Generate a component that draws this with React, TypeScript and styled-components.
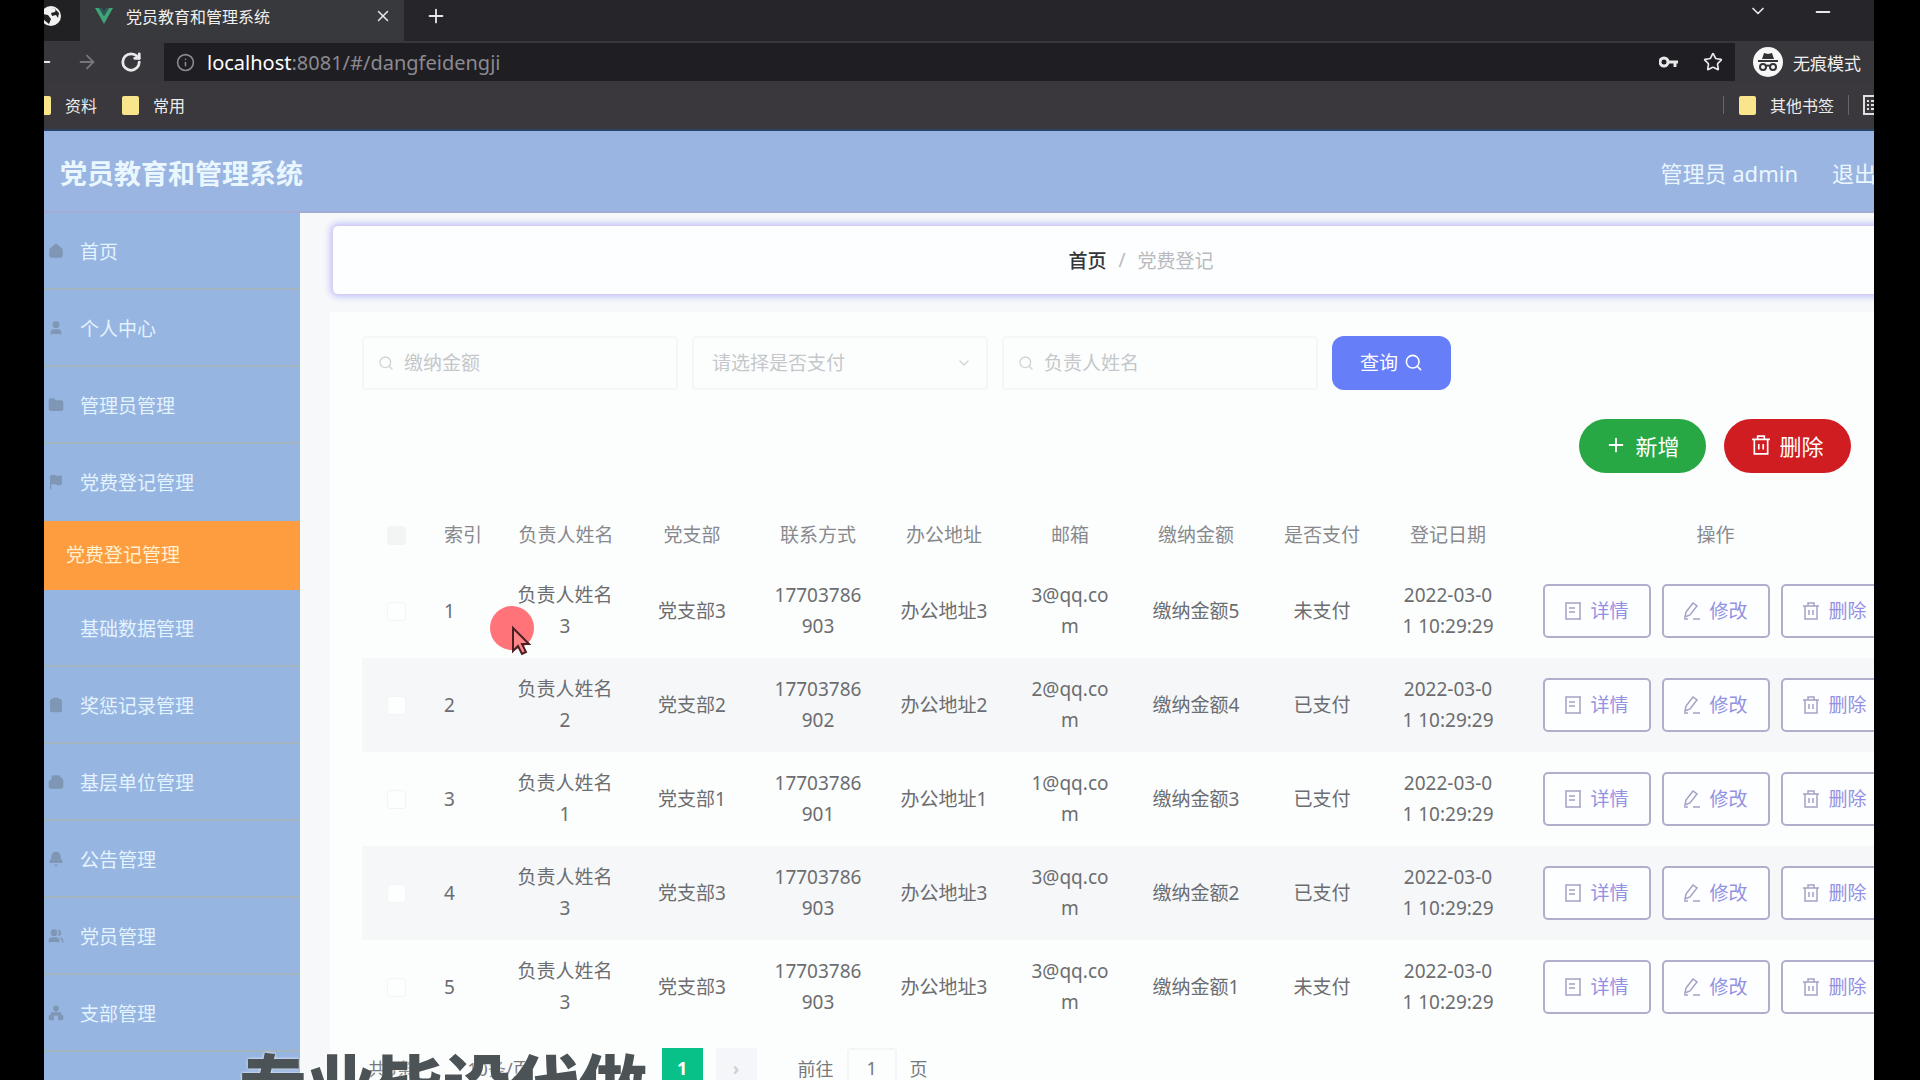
import React from "react";
import styled, { createGlobalStyle, css } from "styled-components";
import {
  ArrowLeft, ArrowRight, ChevronDown, Info, Minus, Plus, RotateCw, Search, Star, X,
  House, User, Folder, Flag, Building2, Bell, Users, Network, ClipboardList,
} from "lucide-react";

const GlobalStyle = createGlobalStyle`
  *, *::before, *::after { box-sizing: border-box; }
  body {
    margin: 0;
    background: #000;
    font-family: "Noto Sans", "Noto Sans CJK SC", sans-serif;
    overflow: hidden;
  }
  button, input, select { font: inherit; margin: 0; }
  a { color: inherit; text-decoration: none; }
`;

const Frame = styled.div`
  position: relative;
  margin: 0 46px 0 44px;
  height: 100vh;
  overflow: hidden;
  background: #fcfefe;
`;

/* ---------- browser chrome ---------- */
const IconButton = styled.button<{ $dim?: boolean }>`
  display: flex;
  flex: none;
  padding: 0;
  border: 0;
  background: none;
  color: ${(p) => (p.$dim ? "#77777b" : "#e8e8ea")};
`;

const TabStrip = styled.div`
  display: flex;
  align-items: center;
  height: 41px;
  padding: 0 40px 10px 0;
  background: #26252a;
`;

const PinnedTab = styled.div`
  display: flex;
  align-self: flex-start;
  flex: none;
  width: 36px;
  height: 41px;
  padding: 5px 0 0;
  background: #212123;
  color: #f2f2f2;
  svg { margin-left: -4px; }
`;

const ActiveTab = styled.div`
  display: flex;
  flex: none;
  align-self: flex-start;
  align-items: center;
  width: 324px;
  height: 41px;
  padding: 0 12px 10px 15px;
  background: #38393c;
  color: #f0f0f0;
  font-size: 16px;
`;

const TabTitle = styled.span`
  flex: 1;
  margin-left: 13px;
  white-space: nowrap;
`;

const WindowControls = styled.div`
  display: flex;
  gap: 44px;
  margin: -8px 0 0 auto;
`;

const NewTab = styled(IconButton)`
  margin-left: 21px;
`;

const Toolbar = styled.div`
  display: flex;
  align-items: center;
  height: 42px;
  background: #38373b;
`;

const NavButtons = styled.div`
  display: flex;
  align-items: center;
  gap: 22px;
  width: 120px;
  margin-left: -12px;
`;

const AddressBar = styled.label`
  display: flex;
  flex: 1;
  align-items: center;
  height: 38px;
  padding: 0 12px;
  margin-left: 12px;
  background: #1f1e23;
  color: #8b8a90;
  font-size: 20px;
  b { color: #fff; font-weight: 400; }
`;

const Url = styled.span`
  flex: 1;
  margin-left: 12px;
`;

const AddressActions = styled.span`
  display: flex;
  gap: 24px;
`;

const Incognito = styled.div`
  display: flex;
  align-items: center;
  gap: 10px;
  padding: 0 13px 0 18px;
  color: #f1f1f1;
  font-size: 17px;
`;

const Bookmarks = styled.nav`
  display: flex;
  align-items: center;
  height: 48px;
  padding-bottom: 2px;
  background: #3a383d;
  border-bottom: 2px solid #2a4368;
  color: #ececec;
  font-size: 16px;
`;

const Bookmark = styled.a`
  display: flex;
  align-items: center;
  gap: 14px;
  margin-right: 25px;
`;

const FirstBookmark = styled(Bookmark)`
  margin-left: -10px;
`;

const FolderMark = styled.i`
  width: 17px;
  height: 19px;
  border-radius: 2px;
  background: #f9e68c;
`;

const OtherBookmarks = styled.div`
  display: flex;
  align-items: center;
  gap: 14px;
  height: 18px;
  margin-left: auto;
  padding-left: 15px;
  border-left: 1px solid #66656a;
`;

const ReadingList = styled.span`
  display: flex;
  width: 26px;
  overflow: hidden;
  padding-left: 13px;
  border-left: 1px solid #66656a;
  svg { flex: none; }
`;

/* ---------- application shell ---------- */
const Page = styled.div`
  width: calc(100% + 106px);
`;

const Header = styled.header`
  display: flex;
  align-items: center;
  height: 82px;
  padding: 2px 104px 0 16px;
  background: #9ab5e1;
  border-bottom: 2px solid #a3add4;
  color: #eaf7ff;
  font-size: 22px;
`;

const AppTitle = styled.h1`
  flex: 1;
  margin: 0;
  font-size: 27px;
  font-weight: 700;
`;

const Account = styled.span`
  margin-right: 34px;
`;

const Body = styled.div`
  display: flex;
  min-height: calc(100vh - 213px);
`;

const Sidebar = styled.nav`
  flex: none;
  width: 256px;
  background: #97b5e1;
  color: #e3f3ff;
  font-size: 19px;
`;

const MenuItem = styled.a<{ $active?: boolean; $plain?: boolean }>`
  display: flex;
  align-items: center;
  gap: 16px;
  height: 77px;
  padding-left: 4px;
  border-bottom: 2px solid #a3b6c0;
  svg { color: #7f97b5; }
  ${(p) => p.$plain && css`border-bottom-color: transparent;`}
  ${(p) => p.$active && css`
    height: 69px;
    padding: 0 0 4px 22px;
    border-bottom: 0;
    background: #fd9d3f;
    color: #fff0cf;
  `}
`;

const IconSlot = styled.span`
  display: flex;
  width: 16px;
`;

const Content = styled.main`
  flex: 1;
  min-width: 0;
  padding: 12px 28px 0 30px;
  background: #f6f8f9;
`;

const Crumbs = styled.nav`
  display: flex;
  align-items: center;
  justify-content: center;
  gap: 12px;
  height: 70px;
  margin: 0 2px 17px;
  border: 1px solid #d3cff0;
  border-radius: 6px;
  background: #fdfeff;
  box-shadow: 0 0 6px 2px #c5c5fb;
  color: #b9babd;
  font-size: 19px;
  b { color: #333538; font-weight: 500; }
`;

const Card = styled.section`
  min-height: 780px;
  padding: 24px 32px 0;
  background: #fcfefe;
`;

/* ---------- search form ---------- */
const SearchForm = styled.form`
  display: flex;
  gap: 14px;
`;

const Field = styled.label<{ $width: number }>`
  display: flex;
  align-items: center;
  gap: 10px;
  width: ${(p) => p.$width}px;
  height: 54px;
  padding: 0 14px;
  border: 2px solid #f4f6f7;
  border-radius: 4px;
  color: #d0d2d4;
  font-size: 19px;
  svg { flex: none; }
  input, select {
    flex: 1;
    min-width: 0;
    padding: 0;
    border: 0;
    outline: 0;
    background: none;
    color: #c5c7ca;
    appearance: none;
  }
  input::placeholder { color: #c5c7ca; opacity: 1; }
  select { padding-left: 4px; }
`;

const Action = styled.button<{ $tone: string; $round?: boolean }>`
  display: flex;
  align-items: center;
  justify-content: center;
  gap: ${(p) => (p.$round ? 8 : 6)}px;
  width: ${(p) => (p.$round ? 127 : 119)}px;
  height: 54px;
  padding: 0 0 2px;
  border: 0;
  border-radius: ${(p) => (p.$round ? 27 : 12)}px;
  background: ${(p) => p.$tone};
  color: #fff;
  font-size: ${(p) => (p.$round ? 22 : 19)}px;
  white-space: nowrap;
`;

const ActionBar = styled.div`
  display: flex;
  justify-content: flex-end;
  gap: 18px;
  margin: 29px 0 34px;
  padding-right: 69px;
`;

/* ---------- table ---------- */
const Table = styled.table`
  width: 100%;
  table-layout: fixed;
  border-collapse: collapse;
  color: #6c6d70;
  font-size: 19px;
  line-height: 31px;
  text-align: center;
  th { height: 57px; padding: 0; color: #88898d; font-weight: 400; }
  td { height: 94px; padding: 0 15px; word-break: break-all; }
  td:nth-child(3) { padding: 0 15px 0 13px; }
  td:nth-child(7) { padding: 0 18px; }
  tbody tr:nth-child(even) { background: #f5f7f9; }
  th:nth-child(2), td:nth-child(2) { padding: 0 0 0 14px; text-align: left; }
  th:first-child, td:first-child, td:last-child { padding: 0; }
`;

const Col = styled.col<{ $width?: number }>`
  width: ${(p) => (p.$width ? `${p.$width}px` : "auto")};
`;

const Tick = styled.input`
  display: block;
  width: 19px;
  height: 19px;
  margin: 0 auto;
  border: 1px solid #f2f4f5;
  border-radius: 3px;
  background: #fdfefe;
  appearance: none;
  th & { background: #f3f5f5; }
`;

const RowActions = styled.div`
  display: flex;
  justify-content: center;
  gap: 11px;
`;

const RowButton = styled.button`
  display: flex;
  flex: none;
  align-items: center;
  justify-content: center;
  gap: 8px;
  width: 108px;
  height: 54px;
  padding: 0;
  border: 2px solid #b0aecd;
  border-radius: 5px;
  background: #fdfeff;
  color: #9391e2;
  font-size: 19px;
  svg { color: #a3a2c6; }
`;

/* ---------- pagination ---------- */
const Pagination = styled.nav`
  display: flex;
  align-items: center;
  gap: 13px;
  margin-top: 14px;
  color: #77787b;
  font-size: 18px;
`;

const Total = styled.span`
  margin-right: 40px;
  padding-left: 6px;
`;

const PageSize = styled.span`
  margin-right: 118px;
`;

const PageButton = styled.button<{ $current?: boolean }>`
  width: 41px;
  height: 40px;
  padding: 0;
  border: 0;
  background: ${(p) => (p.$current ? "#08c189" : "#f5f6fa")};
  color: ${(p) => (p.$current ? "#fff" : "#cfd0d4")};
  font-size: 18px;
  font-weight: 700;
`;

const Jump = styled.label`
  display: flex;
  align-items: center;
  gap: 13px;
  margin-left: 28px;
  input {
    width: 50px;
    height: 40px;
    padding: 0;
    border: 2px solid #f4f5f6;
    border-radius: 4px;
    background: none;
    color: #77787b;
    text-align: center;
  }
`;

/* ---------- overlays ---------- */
const Watermark = styled.div`
  position: absolute;
  bottom: -48px;
  left: 195px;
  color: #4c5356;
  font-size: 68px;
  font-weight: 900;
  line-height: 84px;
  white-space: nowrap;
  text-shadow: 0 0 3px #fff;
`;

const Pointer = styled.svg`
  position: absolute;
  top: 606px;
  left: 446px;
`;

const GlobeIcon = () => (
  <svg width="22" height="22" viewBox="0 0 22 22">
    <circle cx="11" cy="11" r="10" fill="#f2f2f2" />
    <path d="M3 9l5 1 3 4-2 5-5-4zM10 3l6 1-1 3-4 1 1 3 4-1 2 3 1-5-4-4z" fill="#212123" />
  </svg>
);

const Vue = () => (
  <svg width="18" height="18" viewBox="0 0 18 18">
    <path d="M0 1h4l5 8 5-8h4L9 17z" fill="#3fa578" />
    <path d="M4 1h3l2 3 2-3h3L9 9z" fill="#31585a" />
  </svg>
);

const Spy = () => (
  <svg width="30" height="30" viewBox="0 0 30 30">
    <circle cx="15" cy="15" r="15" fill="#f7f7f8" />
    <path d="M9 12l2-6 4 1 4-1 2 6z" fill="#333237" />
    <path d="M5 14h20" stroke="#333237" strokeWidth="2" />
    <g fill="none" stroke="#333237" strokeWidth="2">
      <circle cx="10" cy="20" r="3" />
      <circle cx="20" cy="20" r="3" />
      <path d="M13 19q2-1 4 0" />
    </g>
  </svg>
);

const iconStroke = { fill: "none", stroke: "currentColor", strokeWidth: 2 } as const;

const DetailIcon = () => (
  <svg width="18" height="18" viewBox="0 0 18 18" {...iconStroke}>
    <path d="M13 1H2v16h11M16 1v16M12 1h5M12 17h5M5 6h6M5 10h6" strokeWidth="1.5" />
  </svg>
);

const EditIcon = () => (
  <svg width="18" height="18" viewBox="0 0 18 18" {...iconStroke}>
    <path d="M2 15l1-5 7-9 4 3-7 9zM1 17h4M10 17h7" strokeWidth="1.5" />
  </svg>
);

const BinIcon = ({ size = 18 }: { size?: number }) => (
  <svg width={size} height={size} viewBox="0 0 18 18" {...iconStroke}>
    <path d="M1 4h16M3 4v13h12V4M6 4V1h6v3M7 8v5M11 8v5" strokeWidth="1.5" />
  </svg>
);

const menu = [
  { label: "首页", icon: House },
  { label: "个人中心", icon: User },
  { label: "管理员管理", icon: Folder },
  { label: "党费登记管理", icon: Flag, plain: true },
  { label: "党费登记管理", active: true },
  { label: "基础数据管理" },
  { label: "奖惩记录管理", icon: ClipboardList },
  { label: "基层单位管理", icon: Building2 },
  { label: "公告管理", icon: Bell },
  { label: "党员管理", icon: Users },
  { label: "支部管理", icon: Network },
];

const heads = ["索引", "负责人姓名", "党支部", "联系方式", "办公地址", "邮箱", "缴纳金额", "是否支付", "登记日期", "操作"];

const rows = [
  { n: 3, fee: 5, paid: false },
  { n: 2, fee: 4, paid: true },
  { n: 1, fee: 3, paid: true },
  { n: 3, fee: 2, paid: true },
  { n: 3, fee: 1, paid: false },
];

export default function App() {
  return (
    <>
      <GlobalStyle />
      <Frame>
        <TabStrip>
          <PinnedTab><GlobeIcon /></PinnedTab>
          <ActiveTab>
            <Vue />
            <TabTitle>党员教育和管理系统</TabTitle>
            <IconButton aria-label="关闭标签页"><X size={18} /></IconButton>
          </ActiveTab>
          <NewTab aria-label="新标签页"><Plus size={22} /></NewTab>
          <WindowControls>
            <IconButton aria-label="搜索标签页"><ChevronDown size={20} /></IconButton>
            <IconButton aria-label="最小化"><Minus size={22} /></IconButton>
          </WindowControls>
        </TabStrip>
        <Toolbar>
          <NavButtons>
            <IconButton aria-label="后退"><ArrowLeft size={22} /></IconButton>
            <IconButton aria-label="前进" $dim><ArrowRight size={22} /></IconButton>
            <IconButton aria-label="刷新"><RotateCw size={22} strokeWidth={3} /></IconButton>
          </NavButtons>
          <AddressBar>
            <Info size={19} />
            <Url><b>localhost</b>:8081/#/dangfeidengji</Url>
            <AddressActions>
              <IconButton aria-label="密码">
                <svg width="20" height="20" viewBox="0 0 20 20">
                  <circle cx="5" cy="10" r="4" fill="none" stroke="#e8e8ea" strokeWidth="3" />
                  <path d="M9 10h10M16 10v5" stroke="#e8e8ea" strokeWidth="3" />
                </svg>
              </IconButton>
              <IconButton aria-label="收藏"><Star size={20} /></IconButton>
            </AddressActions>
          </AddressBar>
          <Incognito><Spy />无痕模式</Incognito>
        </Toolbar>
        <Bookmarks>
          <FirstBookmark href="#"><FolderMark />资料</FirstBookmark>
          <Bookmark href="#"><FolderMark />常用</Bookmark>
          <OtherBookmarks>
            <FolderMark />
            <a href="#">其他书签</a>
            <ReadingList>
              <svg width="20" height="20" viewBox="0 0 20 20" fill="none" stroke="#e0e0e0" strokeWidth="2">
                <path d="M2 1h16v18H2zM5 6h2M9 6h6M5 10h2M9 10h6M5 14h2M9 14h6" />
              </svg>
            </ReadingList>
          </OtherBookmarks>
        </Bookmarks>

        <Page>
          <Header>
            <AppTitle>党员教育和管理系统</AppTitle>
            <Account>管理员 admin</Account>
            <a href="#">退出</a>
          </Header>
          <Body>
            <Sidebar>
              {menu.map(({ label, icon: Icon, active, plain }, i) => (
                <MenuItem key={i} href="#" $active={active} $plain={plain}>
                  {!active && <IconSlot>{Icon && <Icon size={16} fill="currentColor" />}</IconSlot>}
                  {label}
                </MenuItem>
              ))}
            </Sidebar>
            <Content>
              <Crumbs>
                <b>首页</b>
                <span>/</span>
                <span>党费登记</span>
              </Crumbs>
              <Card>
                <SearchForm onSubmit={(e) => e.preventDefault()}>
                  <Field $width={316}>
                    <Search size={16} />
                    <input aria-label="缴纳金额" placeholder="缴纳金额" />
                  </Field>
                  <Field $width={296}>
                    <select aria-label="是否支付" defaultValue="">
                      <option value="">请选择是否支付</option>
                      <option>已支付</option>
                      <option>未支付</option>
                    </select>
                    <ChevronDown size={16} />
                  </Field>
                  <Field $width={316}>
                    <Search size={16} />
                    <input aria-label="负责人姓名" placeholder="负责人姓名" />
                  </Field>
                  <Action $tone="#667ef8">查询<Search size={19} /></Action>
                </SearchForm>
                <ActionBar>
                  <Action $tone="#28a745" $round><Plus size={22} />新增</Action>
                  <Action $tone="#d01d22" $round><BinIcon size={20} />删除</Action>
                </ActionBar>
                <Table>
                  <colgroup>
                    <Col $width={68} />
                    <Col $width={73} />
                    {heads.slice(1, -1).map((h) => <Col key={h} $width={126} />)}
                    <Col />
                  </colgroup>
                  <thead>
                    <tr>
                      <th><Tick type="checkbox" aria-label="全选" /></th>
                      {heads.map((h) => <th key={h}>{h}</th>)}
                    </tr>
                  </thead>
                  <tbody>
                    {rows.map((r, i) => (
                      <tr key={i}>
                        <td><Tick type="checkbox" aria-label={`选择第${i + 1}行`} /></td>
                        <td>{i + 1}</td>
                        <td>负责人姓名{r.n}</td>
                        <td>党支部{r.n}</td>
                        <td>1770378690{r.n}</td>
                        <td>办公地址{r.n}</td>
                        <td>{r.n}@qq.com</td>
                        <td>缴纳金额{r.fee}</td>
                        <td>{r.paid ? "已支付" : "未支付"}</td>
                        <td>2022-03-01 10:29:29</td>
                        <td>
                          <RowActions>
                            <RowButton><DetailIcon />详情</RowButton>
                            <RowButton><EditIcon />修改</RowButton>
                            <RowButton><BinIcon />删除</RowButton>
                          </RowActions>
                        </td>
                      </tr>
                    ))}
                  </tbody>
                </Table>
                <Pagination>
                  <Total>共5条</Total>
                  <PageSize>10条/页</PageSize>
                  <PageButton $current>1</PageButton>
                  <PageButton aria-label="下一页">›</PageButton>
                  <Jump>前往<input defaultValue="1" aria-label="页码" />页</Jump>
                </Pagination>
              </Card>
            </Content>
          </Body>
        </Page>

        <Pointer width="54" height="50" viewBox="0 0 54 50">
          <circle cx="22" cy="22" r="22" fill="#ff7379" />
          <path d="M23 22v23l5-5 4 8 4-2-4-8h7z" fill="#ff8588" stroke="#4a2024" strokeWidth="2" />
        </Pointer>
        <Watermark>专业毕设代做</Watermark>
      </Frame>
    </>
  );
}
